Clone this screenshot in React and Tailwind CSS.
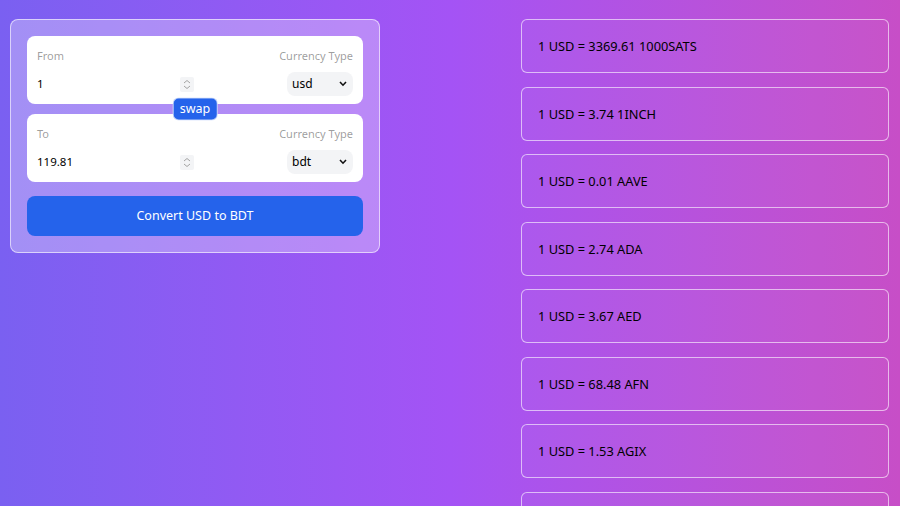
import { useState } from 'react';

const rates = [
  ['3369.61', '1000SATS'],
  ['3.74', '1INCH'],
  ['0.01', 'AAVE'],
  ['2.74', 'ADA'],
  ['3.67', 'AED'],
  ['68.48', 'AFN'],
  ['1.53', 'AGIX'],
  ['134.20', 'ALL'],
];

function Spinner() {
  return (
    <span className="flex h-[15px] w-[14px] shrink-0 items-center justify-center rounded-[2px] bg-gray-100">
      <svg width="8" height="11" viewBox="0 0 8 11" fill="none" stroke="#a3a3a3" strokeWidth="1">
        <path d="M1 4 L4 1.5 L7 4" />
        <path d="M1 7 L4 9.5 L7 7" />
      </svg>
    </span>
  );
}

function CurrencySelect({ value, onChange, options }) {
  return (
    <div className="relative">
      <select
        value={value}
        onChange={(e) => onChange(e.target.value)}
        className="h-[24px] w-[66px] appearance-none rounded-lg bg-gray-100 pl-[5px] pr-4 text-[12px] text-black outline-none"
      >
        {options.map((o) => (
          <option key={o} value={o}>{o}</option>
        ))}
      </select>
      <svg className="pointer-events-none absolute right-[6px] top-[9px]" width="8" height="6" viewBox="0 0 8 6" fill="none" stroke="#111" strokeWidth="1.6">
        <path d="M1 1 L4 4.2 L7 1" />
      </svg>
    </div>
  );
}

function InputBox({ label, amount, onAmount, currency, onCurrency }) {
  return (
    <div className="flex rounded-lg bg-white px-2.5 pb-2 pt-2.5 text-[11px]">
      <div className="flex w-1/2 flex-col gap-1.5">
        <label className="leading-5 text-black/40">{label}</label>
        <div className="flex h-[24px] items-center pr-px">
          <input
            type="text"
            value={amount}
            onChange={(e) => onAmount(e.target.value)}
            className="w-full bg-transparent text-[11.5px] text-black outline-none"
          />
          <Spinner />
        </div>
      </div>
      <div className="flex w-1/2 flex-col items-end gap-1.5">
        <p className="leading-5 text-black/40">Currency Type</p>
        <CurrencySelect value={currency} onChange={onCurrency} options={['usd', 'bdt', 'inr', 'eur']} />
      </div>
    </div>
  );
}

export default function App() {
  const [from, setFrom] = useState('usd');
  const [to, setTo] = useState('bdt');
  const [amount, setAmount] = useState('1');
  const [converted, setConverted] = useState('119.81');

  const swap = () => {
    setFrom(to);
    setTo(from);
    setAmount(converted);
    setConverted(amount);
  };

  return (
    <div
      className="min-h-[506px] w-full bg-gradient-to-r from-[#7a60f1] via-[#a453f5] to-[#c74ec7]"
      style={{ fontFamily: '"Noto Sans", "Open Sans", sans-serif' }}
    >
      <div className="flex h-[506px] items-start justify-between overflow-hidden pl-[10px] pr-[11px] pt-[19px]">
        {/* Converter */}
        <div className="w-[370px] rounded-lg border border-white/60 bg-white/30 p-4">
          <div className="flex flex-col">
            <div className="relative flex flex-col gap-2.5">
              <InputBox label="From" amount={amount} onAmount={setAmount} currency={from} onCurrency={setFrom} />
              <button
                onClick={swap}
                className="absolute left-1/2 top-1/2 flex h-[23px] -translate-x-1/2 -translate-y-1/2 items-center rounded-md border border-white/70 bg-[#2563eb] px-1.5 text-[12.5px] text-white"
              >
                swap
              </button>
              <InputBox label="To" amount={converted} onAmount={setConverted} currency={to} onCurrency={setTo} />
            </div>
            <button className="mt-[14px] h-[40px] w-full rounded-lg bg-[#2563eb] text-[12.5px] text-white">
              Convert {from.toUpperCase()} to {to.toUpperCase()}
            </button>
          </div>
        </div>

        {/* Rates list */}
        <div className="flex w-[368px] flex-col gap-[13.5px]">
          {rates.map(([v, c]) => (
            <div key={c} className="rounded-md border border-white/60 bg-white/[0.03] p-4 text-[12.8px] leading-5 text-black">
              1 USD = {v} {c}
            </div>
          ))}
        </div>
      </div>
    </div>
  );
}
